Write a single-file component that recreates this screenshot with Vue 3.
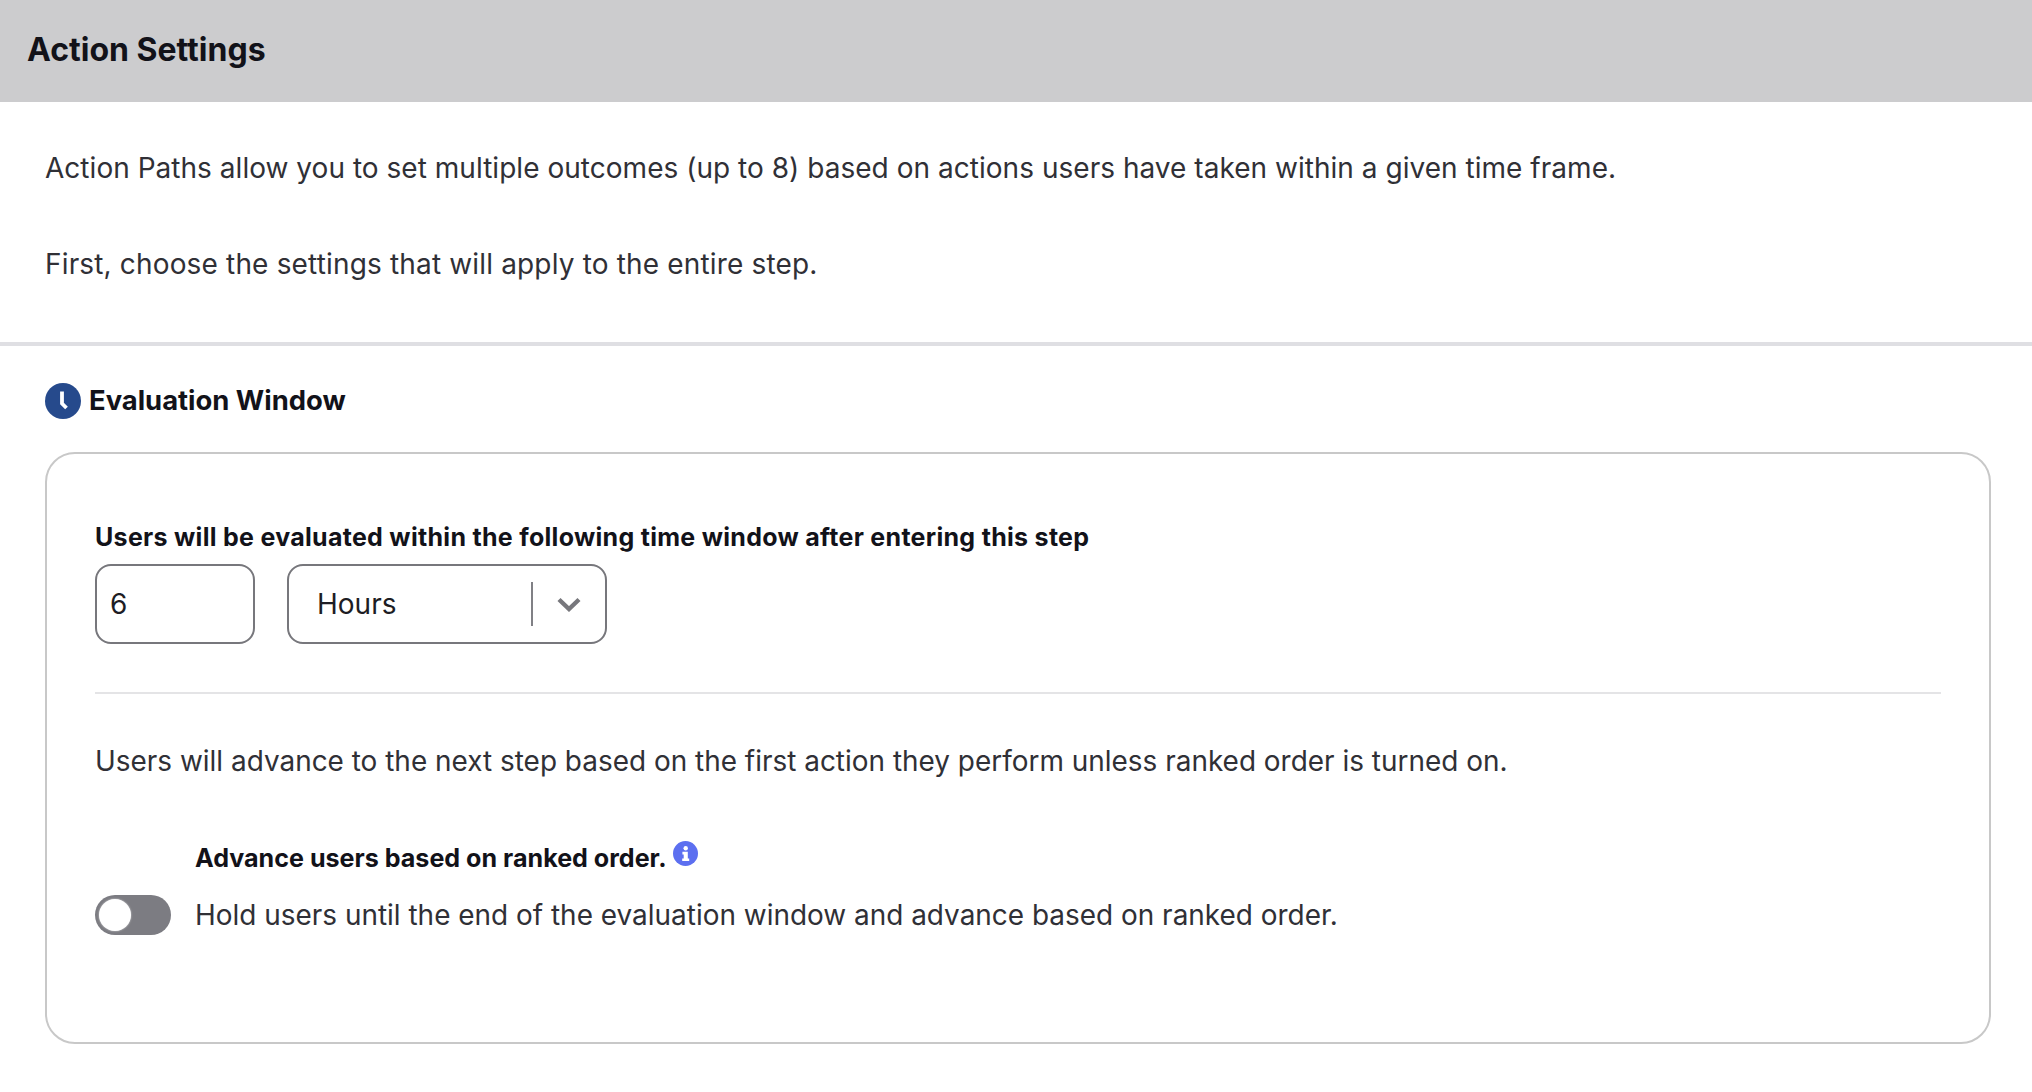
<script setup>
const intro = [
  'Action Paths allow you to set multiple outcomes (up to 8) based on actions users have taken within a given time frame.',
  'First, choose the settings that will apply to the entire step.'
]
</script>

<template>
  <main class="page">
    <header class="topbar"><h1>Action Settings</h1></header>
    <section class="intro">
      <p v-for="line in intro" :key="line">{{ line }}</p>
    </section>
    <section class="window">
      <h2 class="window-title">
        <svg class="clock" viewBox="0 0 36 36" aria-hidden="true">
          <circle cx="18" cy="18" r="18" fill="#264a8c" />
          <path d="M17 8.5V20.5L21.5 25" fill="none" stroke="#fff" stroke-width="3.8" />
        </svg>
        <span class="window-text">Evaluation Window</span>
      </h2>
      <div class="card">
        <div class="label">Users will be evaluated within the following time window after entering this step</div>
        <div class="fields">
          <div class="field number">6</div>
          <div class="field select">
            <span class="select-value">Hours</span>
            <span class="sep"></span>
            <svg class="chev" viewBox="0 0 24 16" aria-hidden="true">
              <path d="M2 3.5l10 9.5 10-9.5" fill="none" stroke="#77777c" stroke-width="4.4" />
            </svg>
          </div>
        </div>
        <hr class="rule" />
        <p class="copy">Users will advance to the next step based on the first action they perform unless ranked order is turned on.</p>
        <div class="rank">
          <div class="rank-label">
            <b>Advance users based on ranked order.</b>
            <svg class="info" viewBox="0 0 25 25" aria-hidden="true">
              <circle cx="12.5" cy="12.5" r="12.5" fill="#5c6ff0" />
              <circle cx="12.7" cy="7.2" r="2.2" fill="#fff" />
              <path d="M9.4 10.8h5.4v6.6h1.4v2.6H9.2v-2.6h1.5v-4H9.4z" fill="#fff" />
            </svg>
          </div>
          <div class="rank-row">
            <span class="toggle"><span class="knob"></span></span>
            <span class="copy">Hold users until the end of the evaluation window and advance based on ranked order.</span>
          </div>
        </div>
      </div>
    </section>
  </main>
</template>

<style>
html, body { background: #fff; }
</style>

<style scoped>
.page {
  width: 2032px;
  height: 1092px;
  overflow: hidden;
  background: #fff;
  font-family: Inter, "Liberation Sans", sans-serif;
  color: #303036;
}
.topbar {
  height: 102px;
  background: #ccccce;
  display: flex;
  align-items: center;
  padding-left: 27px;
}
h1 {
  margin: 0 0 4px;
  font-size: 32px;
  font-weight: 700;
  color: #121219;
}
.intro {
  padding: 46px 45px 0;
  box-sizing: border-box;
  border-bottom: 4px solid #dfdfe3;
  height: 244px;
  font-size: 28px;
  letter-spacing: 0.03px;
}
.intro p {
  margin: 0 0 56px;
  line-height: 40px;
}
.intro p:last-child { letter-spacing: 0.16px; }
.window { padding: 0 41px 0 45px; }
.window-title {
  margin: 37px 0 33px;
  display: flex;
  align-items: center;
  gap: 8px;
  height: 36px;
  font-size: 27.4px;
  font-weight: 700;
  color: #121219;
}
.window-text { margin-top: -2px; }
.clock { width: 36px; height: 36px; }
.card {
  height: 592px;
  box-sizing: border-box;
  border: 2px solid #c8c8c8;
  border-radius: 30px;
  padding: 65px 48px 0;
}
.label {
  font-size: 25px;
  font-weight: 700;
  letter-spacing: 0.29px;
  line-height: 36px;
  color: #121219;
}
.fields {
  display: flex;
  gap: 32px;
  margin-top: 9px;
}
.field {
  height: 80px;
  box-sizing: border-box;
  border: 2px solid #77777c;
  border-radius: 16px;
  display: flex;
  align-items: center;
  font-size: 28px;
  color: #1d1d24;
}
.number { width: 160px; padding-left: 13px; }
.select { width: 320px; padding-left: 28px; }
.select-value { width: 214px; }
.sep { width: 2px; height: 44px; background: #808085; }
.chev { width: 24px; height: 16px; margin-left: 24px; }
.rule {
  margin: 48px 0 0;
  border: 0;
  height: 2px;
  background: #e4e4e6;
}
.copy {
  margin: 0;
  font-size: 27.95px;
  line-height: 40px;
}
.rule + .copy { margin-top: 47px; }
.rank { margin-top: 58px; }
.rank-label {
  margin-left: 100px;
  display: flex;
  align-items: flex-start;
  gap: 6px;
  height: 40px;
}
.rank-label b {
  font-size: 25.1px;
  line-height: 38px;
  color: #121219;
}
.info { width: 25px; height: 25px; margin-top: 2px; }
.rank-row {
  display: flex;
  align-items: center;
  gap: 24px;
  margin-top: 16px;
}
.toggle {
  width: 76px;
  height: 40px;
  box-sizing: border-box;
  border-radius: 20px;
  background: #7c7c82;
  padding: 4px;
}
.knob {
  display: block;
  width: 32px;
  height: 32px;
  border-radius: 50%;
  background: #fff;
  box-shadow: 0 0 2px rgba(255, 255, 255, 0.7);
}
</style>
